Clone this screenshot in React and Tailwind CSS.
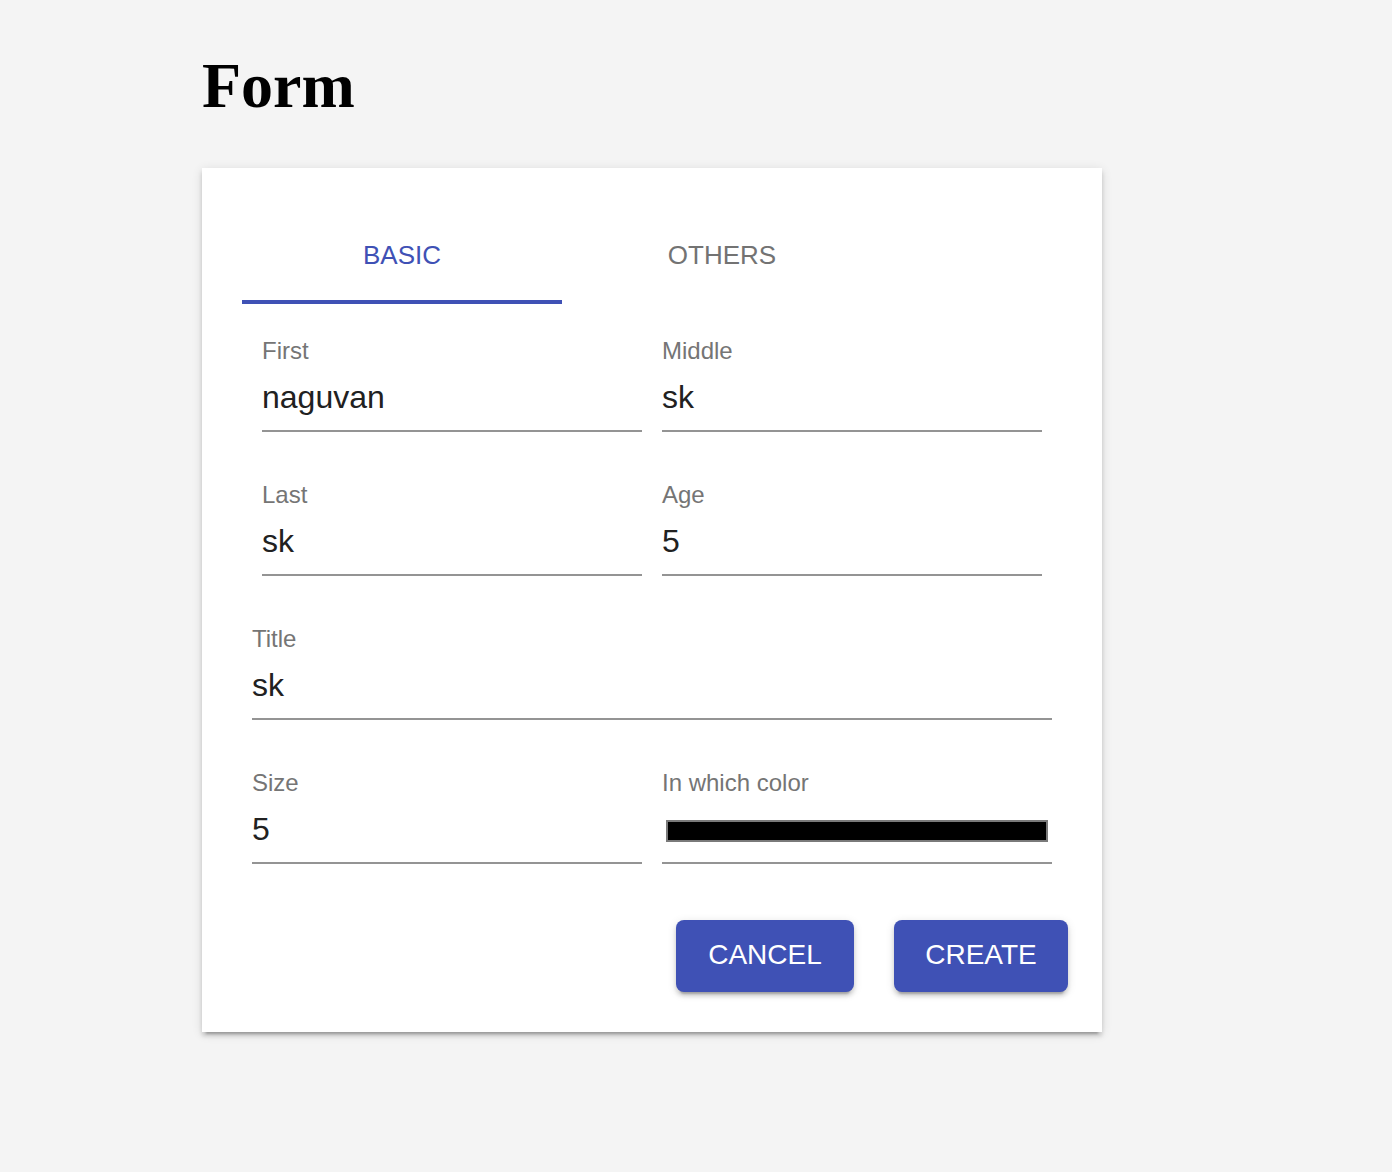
import React from "react";

function Field({ label, value, children, className = "" }) {
  return (
    <div className={"flex h-[96px] flex-col " + className}>
      <div className="pt-[3px] text-[24px] leading-[24px] text-[#757575]">{label}</div>
      <div className="mt-[15px] h-[38px] text-[32px] leading-[38px] text-[#212121]">
        {children ?? value}
      </div>
      <div className="mt-[14px] h-[2px] bg-[#949494]" />
    </div>
  );
}

export default function App() {
  return (
    <div className="min-h-screen bg-[#f4f4f4] pl-[202px] pt-[54px] font-['Liberation_Sans',Arial,sans-serif]">
      <h1 className="font-['Liberation_Serif','Times_New_Roman',serif] text-[64px] font-bold leading-[64px] text-black">
        Form
      </h1>
      <div className="mt-[50px] w-[900px] bg-white p-[40px] shadow-[0_6px_2px_-4px_rgba(0,0,0,0.2),0_4px_4px_0_rgba(0,0,0,0.14),0_2px_10px_0_rgba(0,0,0,0.12)]">
        <div className="flex">
          <div className="relative flex h-[96px] w-[320px] items-center justify-center pb-[2px] text-[26px] text-[#3f51b5]">
            BASIC
            <div className="absolute bottom-0 left-0 h-[4px] w-full bg-[#3f51b5]" />
          </div>
          <div className="flex h-[96px] w-[320px] items-center justify-center pb-[2px] text-[26px] text-[#737373]">
            OTHERS
          </div>
        </div>

        <div className="mt-[32px] flex gap-[20px] px-[20px]">
          <Field label="First" value="naguvan" className="w-[380px]" />
          <Field label="Middle" value="sk" className="w-[380px]" />
        </div>
        <div className="mt-[48px] flex gap-[20px] px-[20px]">
          <Field label="Last" value="sk" className="w-[380px]" />
          <Field label="Age" value="5" className="w-[380px]" />
        </div>
        <div className="mt-[48px] px-[10px]">
          <Field label="Title" value="sk" className="w-full" />
        </div>
        <div className="mt-[48px] flex gap-[20px] px-[10px]">
          <Field label="Size" value="5" className="w-[390px]" />
          <Field label="In which color" className="w-[390px]">
            <div className="flex h-full items-center pt-[4px]">
              <div className="ml-[4px] h-[22px] w-[382px] border-2 border-[#7a7a7a] bg-black" />
            </div>
          </Field>
        </div>

        <div className="mr-[-6px] mt-[56px] flex justify-end gap-[40px]">
          <button className="flex h-[72px] w-[178px] items-center justify-center rounded-[8px] bg-[#3f51b5] pb-[2px] text-[28px] text-white shadow-[0_6px_2px_-4px_rgba(0,0,0,0.2),0_4px_4px_0_rgba(0,0,0,0.14),0_2px_10px_0_rgba(0,0,0,0.12)]">
            CANCEL
          </button>
          <button className="flex h-[72px] w-[174px] items-center justify-center rounded-[8px] bg-[#3f51b5] pb-[2px] text-[28px] text-white shadow-[0_6px_2px_-4px_rgba(0,0,0,0.2),0_4px_4px_0_rgba(0,0,0,0.14),0_2px_10px_0_rgba(0,0,0,0.12)]">
            CREATE
          </button>
        </div>
      </div>
    </div>
  );
}
